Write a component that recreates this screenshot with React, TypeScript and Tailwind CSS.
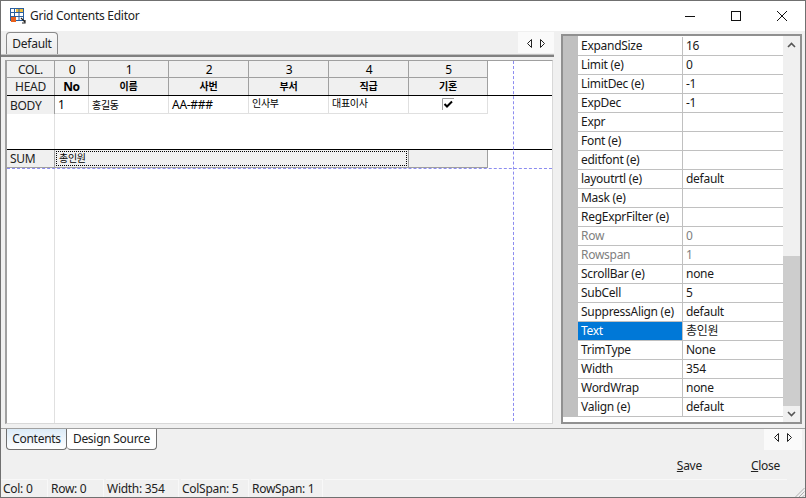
import React from 'react';

const FONT = "font-['Noto_Sans','Noto_Sans_CJK_KR',sans-serif]";

const props: { name: string; value: string; muted?: boolean; selected?: boolean }[] = [
  { name: 'ExpandSize', value: '16' },
  { name: 'Limit (e)', value: '0' },
  { name: 'LimitDec (e)', value: '-1' },
  { name: 'ExpDec', value: '-1' },
  { name: 'Expr', value: '' },
  { name: 'Font (e)', value: '' },
  { name: 'editfont (e)', value: '' },
  { name: 'layoutrtl (e)', value: 'default' },
  { name: 'Mask (e)', value: '' },
  { name: 'RegExprFilter (e)', value: '' },
  { name: 'Row', value: '0', muted: true },
  { name: 'Rowspan', value: '1', muted: true },
  { name: 'ScrollBar (e)', value: 'none' },
  { name: 'SubCell', value: '5' },
  { name: 'SuppressAlign (e)', value: 'default' },
  { name: 'Text', value: '총인원', selected: true },
  { name: 'TrimType', value: 'None' },
  { name: 'Width', value: '354' },
  { name: 'WordWrap', value: 'none' },
  { name: 'Valign (e)', value: 'default' },
];

const colWidths = ['w-[34px]', 'w-[80px]', 'w-[80px]', 'w-[80px]', 'w-[80px]', 'w-[79px]'];
const heads = ['No', '이름', '사번', '부서', '직급', '기혼'];

const AppIcon = () => (
  <svg width="16" height="16" viewBox="0 0 16 16">
    <rect x="0.5" y="0.5" width="13" height="12" fill="#fff" stroke="#2a5f9e" />
    <rect x="6" y="1" width="7" height="3" fill="#f0c040" />
    <path d="M0 4.5h14M0 8.5h14M4.5 1v12M9 1v12" stroke="#2a5f9e" />
    <rect x="1" y="9" width="5" height="5" fill="#e8601c" />
    <path d="M11 10l4 4M12 15h3v-3" stroke="#222" strokeWidth="1.2" fill="none" />
  </svg>
);

const Arrows = () => (
  <svg width="18" height="9" viewBox="0 0 18 9">
    <path d="M4.5 0.5v8l-4-4z" fill="none" stroke="#222" />
    <path d="M13.5 0.5v8l4-4z" fill="none" stroke="#222" />
  </svg>
);

function PropRow({ name, value, muted, selected }: (typeof props)[number]) {
  return (
    <div className="flex h-[19px] border-b border-[#c0c0c0] leading-[17px]">
      <div
        className={`w-[105px] pl-[3px] whitespace-nowrap border-r border-[#c0c0c0] ${
          selected ? 'bg-[#0078d7] text-white' : muted ? 'text-[#808080]' : 'text-[#1a1a1a]'
        }`}
      >
        {name}
      </div>
      <div className={`flex-1 pl-[3px] ${muted ? 'text-[#808080]' : 'text-[#1a1a1a]'}`}>{value}</div>
    </div>
  );
}

export default function App() {
  return (
    <div className={`${FONT} flex h-[498px] w-[806px] flex-col overflow-hidden border border-[#707070] bg-[#f0f0f0] text-[12px] tracking-[-0.28px] text-[#111]`}>
      {/* title bar */}
      <div className="flex h-[30px] shrink-0 items-center bg-white pl-[9px]">
        <AppIcon />
        <span className="ml-[4px] text-[#222]">Grid Contents Editor</span>
        <div className="ml-auto flex items-center">
          <svg width="46" height="30" viewBox="0 0 46 30"><path d="M18 15.5h10" stroke="#111" /></svg>
          <svg width="46" height="30" viewBox="0 0 46 30"><rect x="18.5" y="10.5" width="9" height="9" fill="none" stroke="#111" /></svg>
          <svg width="46" height="30" viewBox="0 0 46 30"><path d="M18 10l10 10M28 10l-10 10" stroke="#111" /></svg>
        </div>
      </div>

      <div className="flex h-[397px] shrink-0">
        {/* left pane */}
        <div className="flex w-[553px] shrink-0 flex-col">
          <div className="flex h-[24px] shrink-0 items-end justify-between border-b border-[#c0c0c0] pl-[5px]">
            <div className="flex h-[22px] w-[52px] items-center justify-center rounded-t-[4px] border border-b-0 border-[#8a8a8a] bg-gradient-to-b from-[#f8f8f8] to-[#ececec] text-[#222]">
              Default
            </div>
            <div className="mb-[1px] flex h-[21px] w-[36px] items-center justify-center bg-[#fafafa] pt-[1px]">
              <Arrows />
            </div>
          </div>
          <div className="h-[2px] shrink-0 bg-[#808080]" />
          <div className="h-[3px] shrink-0" />

          {/* grid */}
          <div className="relative ml-[4px] flex h-[364px] w-[548px] flex-col border border-l-2 border-[#a0a0a0] border-r-[#d8d8d8] border-b-[#d8d8d8] bg-white text-black">
            <div className="flex h-[17px] shrink-0">
              <div className="flex w-[48px] items-center justify-center border-r border-b border-[#a0a0a0] bg-[#f0f0f0] pt-px text-[#222]">COL.</div>
              {colWidths.map((w, i) => (
                <div key={i} className={`${w} flex items-center justify-center border-r border-b border-[#a0a0a0] bg-[#f0f0f0] pl-px pt-px`}>
                  {i}
                </div>
              ))}
            </div>
            <div className="flex h-[17px] shrink-0">
              <div className="flex w-[48px] items-center justify-center border-r border-[#a0a0a0] bg-[#f0f0f0] text-[#222]">HEAD</div>
              {colWidths.map((w, i) => (
                <div key={i} className={`${w} flex items-center justify-center border-r border-[#a0a0a0] bg-[#f0f0f0] font-bold ${i === 0 ? 'pt-px text-[12px]' : 'text-[10px]'}`}>
                  {heads[i]}
                </div>
              ))}
            </div>
            <div className="h-px shrink-0 bg-black" />
            <div className="flex h-[18px] shrink-0">
              <div className="flex w-[48px] items-center border-r border-[#a0a0a0] bg-[#f0f0f0] pl-[3px] pt-px text-[#222]">BODY</div>
              <div className="flex w-[34px] items-center border-r border-b border-[#e0e0e0] pl-[3px] pt-px">1</div>
              <div className="flex w-[80px] items-center border-r border-b border-[#e0e0e0] pl-[3px] pt-px text-[10px]">홍길동</div>
              <div className="flex w-[80px] items-center border-r border-b border-[#e0e0e0] pl-[3px] pt-px">AA-###</div>
              <div className="flex w-[80px] items-start border-r border-b border-[#e0e0e0] pl-[3px] text-[10px] leading-[15px]">인사부</div>
              <div className="flex w-[80px] items-start border-r border-b border-[#e0e0e0] pl-[3px] text-[10px] leading-[15px]">대표이사</div>
              <div className="flex w-[79px] items-center justify-center border-r border-b border-[#e0e0e0]">
                <svg width="12" height="12" viewBox="0 0 12 12" className="mb-px">
                  <path d="M0.5 12V0.5H12" fill="none" stroke="#a0a0a0" />
                  <path d="M2.5 6l2.5 2.5L10 3.5" fill="none" stroke="#000" strokeWidth="2" />
                </svg>
              </div>
            </div>
            <div className="h-[35px] shrink-0">
              <div className="h-full w-[48px] border-r border-[#e0e0e0]" />
            </div>
            <div className="h-px shrink-0 bg-black" />
            <div className="flex h-[18px] shrink-0">
              <div className="flex w-[48px] items-center border-r border-b border-[#a0a0a0] bg-[#f0f0f0] pl-[3px] text-[#222]">SUM</div>
              <div className="flex w-[354px] border-r border-b border-[#a0a0a0] bg-[#f0f0f0] p-px">
                <div className="flex flex-1 items-center border border-dotted border-black pl-[2px] text-[10px]">총인원</div>
              </div>
              <div className="w-[79px] border-r border-b border-[#a0a0a0] bg-[#f0f0f0]" />
            </div>
            <div className="flex-1">
              <div className="h-full w-[48px] border-r border-[#e0e0e0]" />
            </div>
            {/* guide lines */}
            <div className="absolute top-[107px] right-0 left-0 border-t border-dashed border-[#8c8cf0]" />
            <div className="absolute top-0 bottom-[2px] left-[506px] border-l border-dashed border-[#8c8cf0]" />
          </div>
        </div>

        {/* right pane */}
        <div className="ml-[7px] mt-[3px] flex h-[390px] w-[241px] border-2 border-[#909090] bg-white">
          <div className="w-[220px] shrink-0">
            <div className="flex">
              <div className="w-[15px] shrink-0 bg-[#c0c0c0]" />
              <div className="mt-px w-[205px] shrink-0">
                {props.map(p => (
                  <PropRow key={p.name} {...p} />
                ))}
              </div>
            </div>
          </div>
          <div className="flex flex-1 flex-col bg-[#f0f0f0]">
            <div className="flex h-[18px] items-center justify-center">
              <svg width="9" height="6" viewBox="0 0 9 6"><path d="M1 5l3.5-3.5L8 5" fill="none" stroke="#555" strokeWidth="1.6" /></svg>
            </div>
            <div className="h-[202px]" />
            <div className="h-[150px] bg-[#cdcdcd]" />
            <div className="flex flex-1 items-center justify-center">
              <svg width="9" height="6" viewBox="0 0 9 6"><path d="M1 1l3.5 3.5L8 1" fill="none" stroke="#555" strokeWidth="1.6" /></svg>
            </div>
          </div>
        </div>
      </div>

      {/* bottom tabs */}
      <div className="flex h-[23px] shrink-0 items-start justify-between border-t border-[#a0a0a0] pl-[5px] pr-[3px]">
        <div className="flex">
          <div className="flex h-[21px] w-[61px] items-center justify-center rounded-b-[4px] border border-t-0 border-[#707070] bg-gradient-to-b from-[#dcebf7] to-white text-[#222]">
            Contents
          </div>
          <div className="flex h-[21px] w-[90px] items-center justify-center rounded-b-[4px] border border-t-0 border-l-0 border-[#707070] bg-white text-[#222]">
            Design Source
          </div>
        </div>
        <div className="flex h-[21px] w-[38px] items-start justify-center bg-[#fafafa] pt-[4px]">
          <Arrows />
        </div>
      </div>

      {/* buttons */}
      <div className="flex h-[28px] shrink-0 items-center justify-end gap-[49px] pr-[25px] pt-[2px] text-[#222]">
        <span><u>S</u>ave</span>
        <span><u>C</u>lose</span>
      </div>

      {/* status bar */}
      <div className="relative flex flex-1 gap-[2px] text-[#222]">
        <div className="flex h-full w-[47px] items-center border-t border-r border-[#f8f8f8] pb-px pl-[2px]">Col: 0</div>
        <div className="flex h-full w-[54px] items-center border-t border-r border-[#f8f8f8] pb-px pl-[1px]">Row: 0</div>
        <div className="flex h-full w-[73px] items-center border-t border-r border-[#f8f8f8] pb-px pl-[1px]">Width: 354</div>
        <div className="flex h-full w-[68px] items-center border-t border-r border-[#f8f8f8] pb-px pl-[1px]">ColSpan: 5</div>
        <div className="flex h-full w-[72px] items-center border-t border-r border-[#f8f8f8] pb-px pl-[1px]">RowSpan: 1</div>
        <div className="mr-[18px] h-full flex-1 border-t border-[#f8f8f8]" />
        <svg width="12" height="12" viewBox="0 0 12 12" className="absolute right-0 bottom-0">
          <path d="M11.5 1L1 11.5M11.5 4.5L4.5 11.5M11.5 8L8 11.5" stroke="#b0b0b0" />
        </svg>
      </div>
    </div>
  );
}
